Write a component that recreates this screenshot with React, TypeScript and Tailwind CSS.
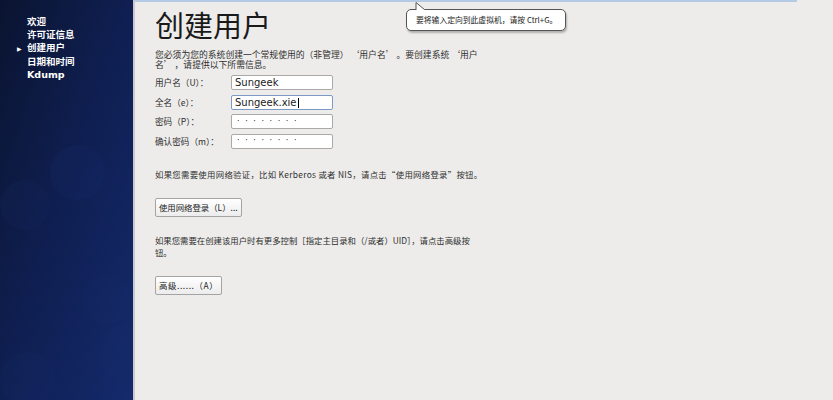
import React from "react";

const font = { fontFamily: '"DejaVu Sans", "Noto Sans CJK SC", sans-serif' };
const cjk = { fontFamily: '"Noto Sans CJK SC", "DejaVu Sans", sans-serif' };

const navItems = ["欢迎", "许可证信息", "创建用户", "日期和时间", "Kdump"];

function Field({ label, value, focused, password }: { label: string; value: string; focused?: boolean; password?: boolean }) {
  return (
    <div className="flex items-center h-[19.5px]">
      <div className="w-[76px] text-[8.6px] text-[#2e2e2e]" style={cjk}>{label}</div>
      <div
        className={`w-[102px] h-[15px] bg-white rounded-[2px] border flex items-center px-[3px] text-[10px] text-[#222] ${
          focused ? "border-[#7d9ac6]" : "border-[#a9a9a9]"
        }`}
      >
        {password ? (
          <span className="tracking-[5.6px] text-[8px] pl-[2px]">········</span>
        ) : (
          <span>
            {value}
            {focused && <span className="inline-block w-px h-[10px] bg-black align-middle ml-px" />}
          </span>
        )}
      </div>
    </div>
  );
}

export default function App() {
  return (
    <div className="w-[833px] h-[400px] flex overflow-hidden bg-[#edeceb]" style={font}>
      {/* sidebar */}
      <div className="relative w-[133px] h-full overflow-hidden bg-gradient-to-br from-[#0a1431] via-[#0f1f52] to-[#142a6c]">
        <div className="absolute left-[50px] top-[145px] w-[55px] h-[55px] rounded-full bg-[#1a2d6e]/20" />
        <div className="absolute left-[0px] top-[180px] w-[50px] h-[50px] rounded-full bg-[#1a2d6e]/15" />
        <div className="absolute left-[82px] top-[275px] w-[50px] h-[50px] rounded-full bg-[#1a2d6e]/15" />
        <div className="absolute left-[98px] top-[325px] w-[50px] h-[55px] rounded-full bg-[#1a2d6e]/15" />
        <div className="absolute left-[0px] top-[352px] w-[55px] h-[55px] rounded-full bg-[#1a2d6e]/15" />
        <div className="relative pt-[15px] pl-[27px] flex flex-col">
          {navItems.map((n, i) => (
            <div key={n} className="relative h-[13.2px] text-[9.5px] font-bold text-white leading-[13px]">
              {i === 2 && (
                <span className="absolute left-[-10px] top-[1px] text-[6px]">▶</span>
              )}
              {n}
            </div>
          ))}
        </div>
      </div>
      <div className="w-[2px] h-full bg-[#c9c9cf]" />

      {/* main */}
      <div className="relative flex-1 h-full">
        <div className="h-[2px] w-[662px] bg-[#b4cbe6]" />
        <div className="pl-[20px] pt-[8px]">
          <h1 className="text-[29px] leading-[34px] text-[#1a1a1a]">创建用户</h1>
          <p className="mt-[6px] w-[324px] text-[8.8px] leading-[10px] text-[#2e2e2e]" style={cjk}>
            您必须为您的系统创建一个常规使用的（非管理） ‘用户名’ 。要创建系统 ‘用户名’ ，请提供以下所需信息。
          </p>
          <div className="mt-[3px] flex flex-col">
            <Field label="用户名（U）：" value="Sungeek" />
            <Field label="全名（e）：" value="Sungeek.xie" focused />
            <Field label="密码（P）：" value="" password />
            <Field label="确认密码（m）：" value="" password />
          </div>
          <p className="mt-[17px] text-[8.4px] tracking-[0.3px] text-[#2e2e2e] leading-[12px]" style={cjk}>
            如果您需要使用网络验证，比如 Kerberos 或者 NIS，请点击“使用网络登录”按钮。
          </p>
          <button className="mt-[18px] h-[19px] px-[3px] border border-[#a4a4a4] rounded-[2px] bg-gradient-to-b from-white to-[#ececec] text-[8.4px] text-[#222]" style={cjk}>
            使用网络登录（L）...
          </button>
          <p className="mt-[16px] w-[326px] text-[8.4px] text-[#2e2e2e] leading-[12px]" style={cjk}>
            如果您需要在创建该用户时有更多控制［指定主目录和（/或者）UID］，请点击高级按钮。
          </p>
          <button className="mt-[18px] h-[19px] px-[3px] border border-[#a4a4a4] rounded-[2px] bg-gradient-to-b from-white to-[#ececec] text-[8.4px] tracking-[0.6px] text-[#222]" style={cjk}>
            高级......（A）
          </button>
        </div>

        {/* tooltip */}
        <div className="absolute left-[271px] top-[9px] w-[160px] h-[22px] rounded-[5px] border border-[#555] bg-white shadow-[1px_2px_2px_rgba(0,0,0,0.25)] flex items-center pl-[9px] text-[7.8px] text-[#222]" style={cjk}>
          要将输入定向到此虚拟机，请按 Ctrl+G。
        </div>
        <svg className="absolute left-[278px] top-[2px]" width="20" height="9" viewBox="0 0 20 9">
          <path d="M3 8 L3 0.5 L12 8" fill="white" stroke="#555" strokeWidth="1" />
          <path d="M3.6 8.6 L12 8.6" stroke="white" strokeWidth="1.5" />
        </svg>
      </div>
    </div>
  );
}
